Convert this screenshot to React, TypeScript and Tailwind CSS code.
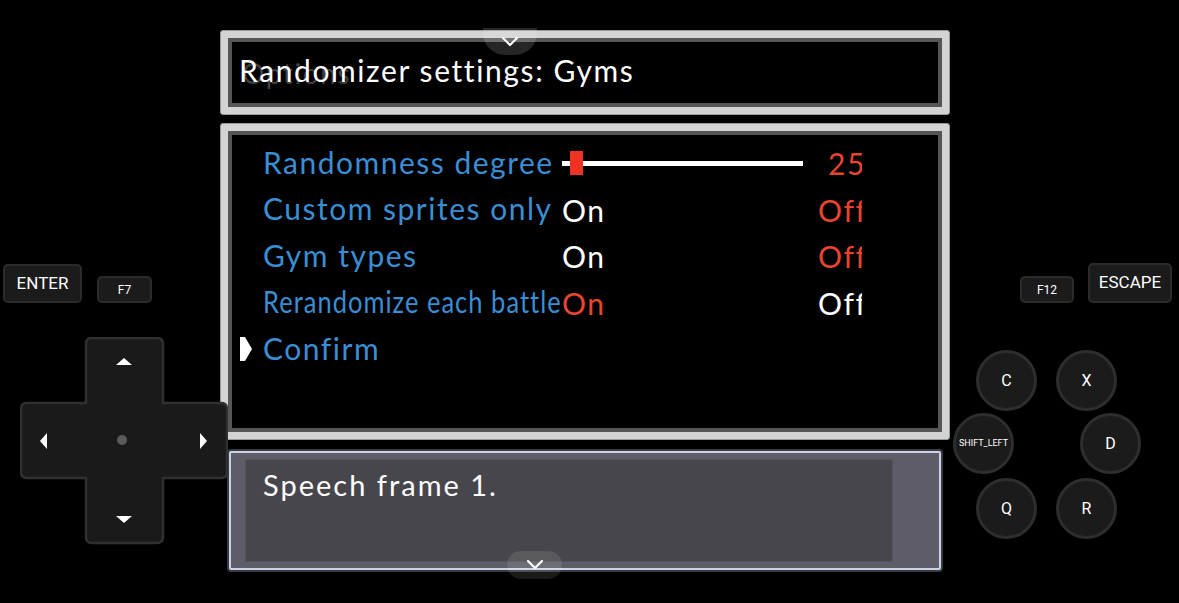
import React from "react";

const GAME_FONT = "font-['Lato','Noto_Sans',sans-serif]";
const PAD_FONT = "font-['Roboto','Liberation_Sans',sans-serif]";

interface Row {
  label: string;
  squish?: boolean;
  kind: "slider" | "toggle" | "action";
  on?: boolean;
}

const rows: Row[] = [
  { label: "Randomness degree", kind: "slider" },
  { label: "Custom sprites only", kind: "toggle", on: false },
  { label: "Gym types", kind: "toggle", on: false },
  { label: "Rerandomize each battle", kind: "toggle", on: true, squish: true },
  { label: "Confirm", kind: "action" },
];

function Chevron() {
  return (
    <svg width="20" height="12" viewBox="0 0 20 12">
      <path d="M3 2 L10 9 L17 2" fill="none" stroke="white" strokeWidth="2.2" strokeLinecap="round" strokeLinejoin="round" />
    </svg>
  );
}

function Frame({ children, className = "" }: { children: React.ReactNode; className?: string }) {
  return (
    <div className={`border border-[#9a9a9a] rounded-[3px] bg-[#d3d3d3] p-[7px] ${className}`}>
      <div className="h-full border-[4px] border-[#565656] bg-black">{children}</div>
    </div>
  );
}

function OptionRow({ row, selected }: { row: Row; selected?: boolean }) {
  return (
    <div className="flex h-[46.5px] items-center tracking-[1.5px]">
      <div className="flex w-[31px] justify-end pr-[11px]">
        {selected && (
          <svg width="12" height="26" viewBox="0 0 12 26">
            <path d="M0 1 L5 1 L12 13 L5 25 L0 25 Z" fill="white" />
          </svg>
        )}
      </div>
      <div className={`w-[290px] whitespace-nowrap ${row.squish ? "" : "overflow-hidden"}`}>
        <span
          className={`inline-block text-[#3a8ed3] text-[30px] leading-none ${row.squish ? "origin-left scale-x-[0.85] tracking-[1.2px]" : ""}`}
        >
          {row.label}
        </span>
      </div>
      {row.kind === "slider" && (
        <>
          <div className="ml-[9px] relative h-[24px] w-[241px] flex items-center">
            <div className="h-[5px] w-full bg-white" />
            <div className="absolute left-[8px] top-0 h-[24px] w-[13px] bg-[#ee3322]" />
          </div>
          <div className="ml-[15px] w-[44px] overflow-hidden whitespace-nowrap pl-[10px] text-[30px] leading-none text-[#e8452f]">25</div>
        </>
      )}
      {row.kind === "toggle" && (
        <>
          <div className={`ml-[9px] w-[256px] text-[30px] leading-none ${row.on ? "text-[#e8452f]" : "text-white"}`}>On</div>
          <div className={`w-[44px] overflow-hidden whitespace-nowrap text-[30px] leading-none ${row.on ? "text-white" : "text-[#e8452f]"}`}>Off</div>
        </>
      )}
    </div>
  );
}

function KeyButton({ label, className = "" }: { label: string; className?: string }) {
  return (
    <div className={`flex items-center justify-center rounded-[5px] border-2 border-[#2b2b2b] bg-[#1b1b1b] text-white ${className}`}>
      {label}
    </div>
  );
}

function RoundButton({ label, small }: { label: string; small?: boolean }) {
  return (
    <div
      className={`flex h-[61px] w-[61px] items-center justify-center rounded-full border-[3px] border-[#2e2e2e] bg-[#1b1b1b] text-white ${small ? "text-[9px]" : "text-[16px]"}`}
    >
      {label}
    </div>
  );
}

function DPad() {
  return (
    <svg width="208" height="208" viewBox="0 0 208 208">
      <path
        d="M72 1 H137 Q143 1 143 7 V66 H201 Q207 66 207 72 V135 Q207 141 201 141 H143 V200 Q143 206 137 206 H72 Q66 206 66 200 V141 H7 Q1 141 1 135 V72 Q1 66 7 66 H66 V7 Q66 1 72 1 Z"
        fill="#1a1a1a"
        stroke="#303030"
        strokeWidth="2.5"
      />
      <path d="M96 28 L104 21 L112 28 Z" fill="white" />
      <path d="M96 179 L112 179 L104 186 Z" fill="white" />
      <path d="M20 104 L27 96 L27 112 Z" fill="white" />
      <path d="M180 96 L187 104 L180 112 Z" fill="white" />
      <circle cx="102" cy="103" r="5" fill="#5a5a5a" />
    </svg>
  );
}

export default function App() {
  return (
    <div className={`relative h-[603px] w-[1179px] overflow-hidden bg-black ${GAME_FONT}`}>
      <div className="ml-[220px] flex w-[730px] flex-col pt-[30px]">
        <Frame className="h-[85px]">
          <div className="relative pl-[7px] pt-[13px] tracking-[1.6px]">
            <div className="absolute left-[10px] top-[17px] text-[28px] leading-none text-white/25">Options</div>
            <div className="relative text-[30px] leading-none text-white">Randomizer settings: Gyms</div>
          </div>
        </Frame>

        <Frame className="mt-[8px] h-[317px]">
          <div className="pt-[5px]">
            {rows.map((row, i) => (
              <OptionRow key={row.label} row={row} selected={i === 4} />
            ))}
          </div>
        </Frame>

        <div className="mx-[7px] mt-[9px] h-[123px] rounded-[4px] border-[2px] border-[#3b3b3d] bg-[#3b3b3d]">
          <div className="h-full rounded-[2px] border-2 border-[#c9d2ea] bg-[#5e5c66] pb-[6px] pl-[14px] pr-[46px] pt-[6px]">
            <div className="h-full rounded-[1px] border border-[#55545a] bg-[#47464c] pl-[17px] pt-[10px]">
              <div className="text-[29px] leading-none tracking-[2px] text-white">Speech frame 1.</div>
            </div>
          </div>
        </div>
      </div>

      {/* overlay chevrons */}
      <div className="absolute left-[483px] top-[28px] flex h-[27px] w-[54px] items-start justify-center rounded-b-[22px] bg-white/15 pt-[8px]">
        <Chevron />
      </div>
      <div className="absolute left-[507px] top-[551px] flex h-[28px] w-[55px] items-center justify-center rounded-full bg-white/10">
        <Chevron />
      </div>

      {/* left pad */}
      <div className={`absolute left-[3px] top-[264px] flex flex-col ${PAD_FONT}`}>
        <div className="flex items-end gap-[15px]">
          <KeyButton label="ENTER" className="h-[39px] w-[79px] text-[17px]" />
          <KeyButton label="F7" className="h-[27px] w-[55px] text-[12px]" />
        </div>
        <div className="ml-[17px] mt-[34px]">
          <DPad />
        </div>
      </div>

      {/* right pad */}
      <div className={`absolute left-[953px] top-[263px] flex w-[219px] flex-col ${PAD_FONT}`}>
        <div className="flex items-end justify-end gap-[14px]">
          <KeyButton label="F12" className="h-[27px] w-[54px] text-[12px]" />
          <KeyButton label="ESCAPE" className="h-[40px] w-[84px] text-[17px]" />
        </div>
        <div className="mt-[47px] flex w-[188px] flex-col gap-[2px]">
          <div className="flex gap-[19px] pl-[23px]">
            <RoundButton label="C" />
            <RoundButton label="X" />
          </div>
          <div className="flex justify-between">
            <RoundButton label="SHIFT_LEFT" small />
            <RoundButton label="D" />
          </div>
          <div className="mt-[2px] flex gap-[19px] pl-[23px]">
            <RoundButton label="Q" />
            <RoundButton label="R" />
          </div>
        </div>
      </div>
    </div>
  );
}
